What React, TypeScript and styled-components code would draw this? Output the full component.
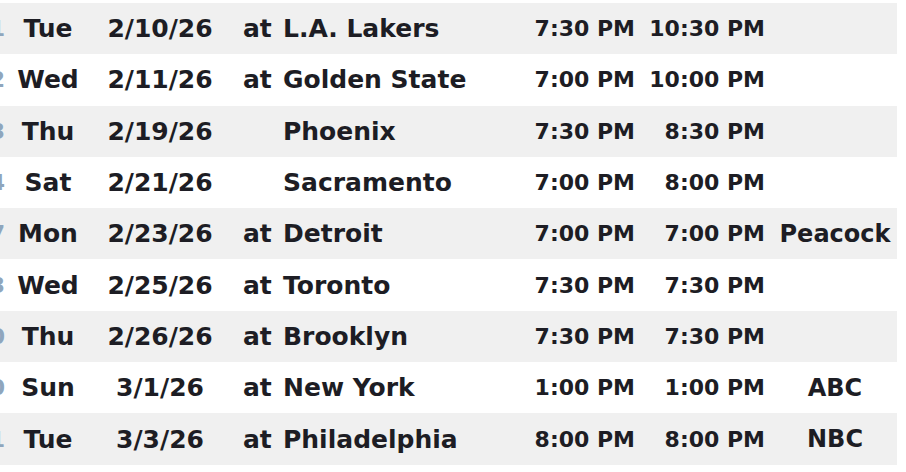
import styled, { createGlobalStyle } from "styled-components";

const GlobalStyle = createGlobalStyle`
  html, body {
    margin: 0;
    padding: 0;
    background: #ffffff;
  }
`;

type Game = {
  num: string;
  day: string;
  date: string;
  away: boolean;
  opponent: string;
  local: string;
  eastern: string;
  tv?: string;
};

const games: Game[] = [
  { num: "1", day: "Tue", date: "2/10/26", away: true, opponent: "L.A. Lakers", local: "7:30 PM", eastern: "10:30 PM" },
  { num: "2", day: "Wed", date: "2/11/26", away: true, opponent: "Golden State", local: "7:00 PM", eastern: "10:00 PM" },
  { num: "3", day: "Thu", date: "2/19/26", away: false, opponent: "Phoenix", local: "7:30 PM", eastern: "8:30 PM" },
  { num: "4", day: "Sat", date: "2/21/26", away: false, opponent: "Sacramento", local: "7:00 PM", eastern: "8:00 PM" },
  { num: "7", day: "Mon", date: "2/23/26", away: true, opponent: "Detroit", local: "7:00 PM", eastern: "7:00 PM", tv: "Peacock" },
  { num: "3", day: "Wed", date: "2/25/26", away: true, opponent: "Toronto", local: "7:30 PM", eastern: "7:30 PM" },
  { num: "0", day: "Thu", date: "2/26/26", away: true, opponent: "Brooklyn", local: "7:30 PM", eastern: "7:30 PM" },
  { num: "0", day: "Sun", date: "3/1/26", away: true, opponent: "New York", local: "1:00 PM", eastern: "1:00 PM", tv: "ABC" },
  { num: "1", day: "Tue", date: "3/3/26", away: true, opponent: "Philadelphia", local: "8:00 PM", eastern: "8:00 PM", tv: "NBC" },
];

const App = () => {
  return (
    <>
      <GlobalStyle />
      <Schedule>
        {games.map((game, i) => (
          <Row key={game.date} $shaded={i % 2 === 0}>
            <NumCell>
              <span>{game.num}</span>
            </NumCell>
            <Day>{game.day}</Day>
            <DateCell>{game.date}</DateCell>
            <At>{game.away ? "at" : ""}</At>
            <Opponent>{game.opponent}</Opponent>
            <Time>{game.local}</Time>
            <Time>{game.eastern}</Time>
            <span />
            <Network>{game.tv}</Network>
          </Row>
        ))}
      </Schedule>
    </>
  );
};

const Schedule = styled.div`
  padding-top: 3px;
  font-family: "DejaVu Sans", "Liberation Sans", sans-serif;
  font-weight: bold;
  color: #1d1d24;
`;

const Row = styled.div<{ $shaded: boolean }>`
  display: grid;
  grid-template-columns: 5px 86px 138px 54px 250px 102px 130px 10px 120px;
  align-items: center;
  width: 897px;
  height: 51.3px;
  background: ${p => (p.$shaded ? "#f0f0f0" : "#ffffff")};
  font-size: 25px;
  white-space: nowrap;
`;

const NumCell = styled.div`
  display: flex;
  justify-content: flex-end;
  overflow: hidden;
  color: #8fa6bd;
  font-size: 22px;
`;

const Day = styled.div`
  text-align: center;
`;

const DateCell = styled.div`
  text-align: center;
`;

const At = styled.div`
  padding-left: 14px;
`;

const Opponent = styled.div``;

const Time = styled.div`
  text-align: right;
  font-size: 22px;
`;

const Network = styled.div`
  text-align: center;
  font-size: 24px;
`;

export default App;
